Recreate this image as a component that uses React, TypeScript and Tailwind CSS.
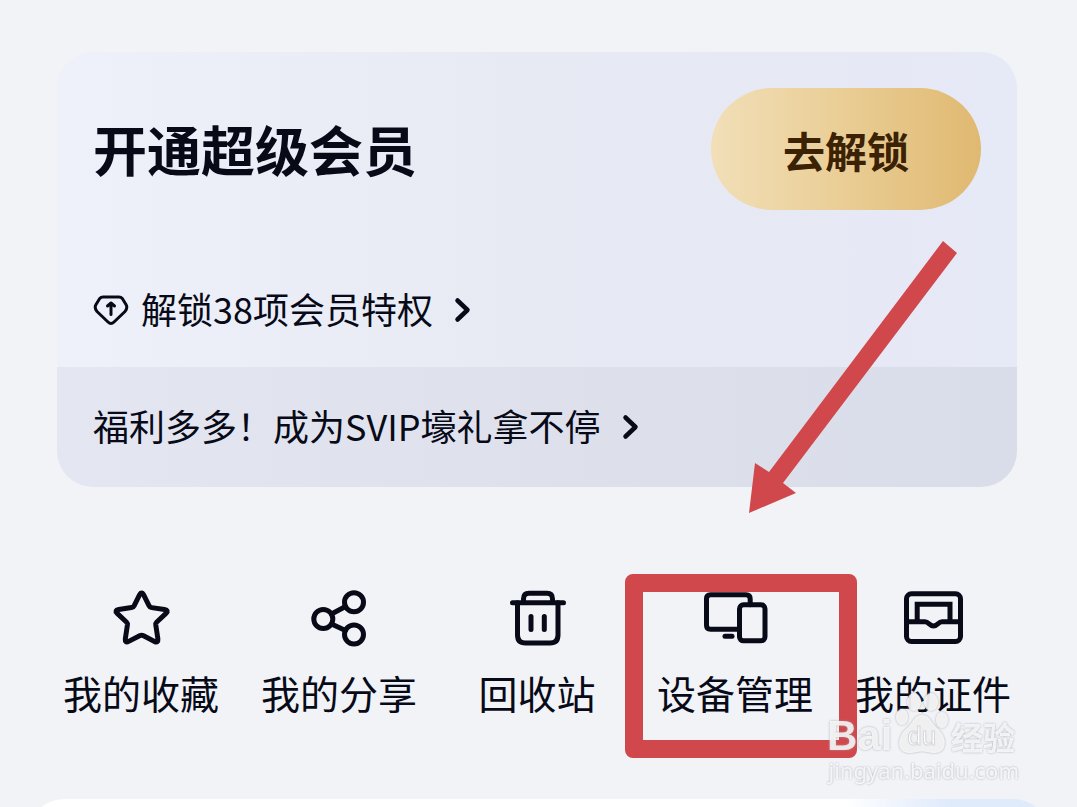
import type { ReactNode } from 'react';

const StarIcon = () => (
  <path d="M34.4 13.2Q36.6 9 38.8 13.2L44 23.6Q44.8 25.3 46.7 25.6L59.5 27.4Q64 28.2 61 31.4L51.8 40Q50.6 41.2 50.8 43L52.9 57Q53.3 61.3 49.5 59.4L38.6 53.8Q36.6 52.8 34.6 53.8L23.7 59.4Q19.9 61.3 20.3 57L22.4 43Q22.6 41.2 21.4 40L12.2 31.4Q9.2 28.2 13.7 27.4L26.5 25.6Q28.4 25.3 29.2 23.6Z" />
);

const ShareIcon = () => (
  <>
    <circle cx="20.3" cy="37" r="9.5" />
    <circle cx="51" cy="20.3" r="9.5" />
    <circle cx="51" cy="52.5" r="9.5" />
    <path d="M28.5 32L42.5 24.5M28.5 42L42.5 48.5" />
  </>
);

const TrashIcon = () => (
  <>
    <path d="M11.5 20.7H62.5M22.5 20.7V17Q22.5 11.2 28 11.2H46Q51.5 11.2 51.5 17V20.7" />
    <path d="M16.5 20.7V53Q16.5 61 24.5 61H49Q57 61 57 53V20.7" />
    <path d="M30 34.5V47.5M43.3 34.5V47.5" />
  </>
);

const DevicesIcon = () => (
  <>
    <path d="M40.5 47.2H11.5Q7.5 47.2 7.5 43.2V16.8Q7.5 12.8 11.5 12.8H47Q51.2 12.8 51.2 17V22.8" />
    <rect x="40.5" y="22.8" width="25.5" height="36" rx="4" />
    <path d="M26 54.3H33" />
  </>
);

const CardBoxIcon = () => (
  <>
    <rect x="9.5" y="11.8" width="54" height="47.7" rx="5" />
    <path d="M20.2 39.5V22.2H53V39.5" strokeLinejoin="miter" />
    <path d="M9.5 39.7H28C32 39.7 32 43.9 36.5 43.9S41 39.7 45 39.7H63.5" />
  </>
);

const Chevron = () => (
  <svg viewBox="0 0 20 28" className="h-7 w-5" fill="none" stroke="currentColor" strokeWidth="4.5" strokeLinecap="round" strokeLinejoin="round">
    <path d="M4.5 4.5L14.5 14L4.5 23.5" />
  </svg>
);

type MenuItem = { label: string; icon: ReactNode; marked?: boolean };

const menu: MenuItem[] = [
  { label: '我的收藏', icon: <StarIcon /> },
  { label: '我的分享', icon: <ShareIcon /> },
  { label: '回收站', icon: <TrashIcon /> },
  { label: '设备管理', icon: <DevicesIcon />, marked: true },
  { label: '我的证件', icon: <CardBoxIcon /> },
];

const Watermark = () => (
  <div className="pointer-events-none absolute right-[13px] top-[108px] w-[192px] text-white/80 drop-shadow-[0_0_1px_#a0a0a8]">
    <div className="flex h-16 items-end justify-between pr-1">
      <span className="font-['Liberation_Sans',sans-serif] text-[42px] font-bold leading-9">Bai</span>
      <div className="relative h-16 w-[52px]">
        <svg viewBox="0 0 52 64" className="h-full w-full" fill="currentColor">
          <ellipse cx="6" cy="27" rx="6" ry="8" />
          <ellipse cx="18" cy="12" rx="7" ry="9" />
          <ellipse cx="35" cy="12" rx="7" ry="9" />
          <ellipse cx="46" cy="30" rx="6" ry="8" />
          <path d="M26 25C34 25 35 33 42 39C52 48 51 63 39 63C33 63 31 61.5 26 61.5S19 63 13 63C1 63 0 48 10 39C17 33 18 25 26 25Z" />
        </svg>
        <span className="absolute inset-x-0 bottom-1 text-center font-['Liberation_Sans',sans-serif] text-[26px] leading-7 text-white [-webkit-text-stroke:1px_#d5d6dc]">
          du
        </span>
      </div>
      <span className="text-[32px] font-bold leading-9">经验</span>
    </div>
    <div className="pt-1 text-right font-['Noto_Sans',sans-serif] text-[22px] leading-6">jingyan.baidu.com</div>
  </div>
);

const App = () => {
  return (
    <main className="min-h-screen overflow-hidden bg-[#f1f3f7] px-7 pt-[52px] font-['Noto_Sans_CJK_SC',sans-serif] text-[#080a18]">
      {/* === Membership card === */}
      <section className="relative ml-[29px] mr-8">
        <div className="overflow-hidden rounded-[36px]">
          <div className="bg-gradient-to-r from-[#eff1fa] via-[#e7eaf3] to-[#e6e9f6] px-9 pb-[33px] pt-9">
            <div className="flex items-center justify-between">
              <h1 className="text-[54px] font-bold leading-[72px]">开通超级会员</h1>
              <button className="h-[122px] w-[270px] rounded-full bg-gradient-to-r from-[#f2dfb8] via-[#e9cd94] to-[#e0b971] text-[42px] font-bold text-[#3c2205]">
                去解锁
              </button>
            </div>
            <a href="#privileges" className="mt-[76px] flex h-12 items-center text-4xl leading-[40px]">
              <svg viewBox="0 0 36 36" className="mr-3 h-9 w-9" fill="none" stroke="currentColor" strokeWidth="3" strokeLinecap="round" strokeLinejoin="round">
                <path d="M10 5H26Q28 5 29.3 6.5L33 12.5Q35 16 32 19.5L21 30Q18 33 15 30L4 19.5Q1 16 3 12.5L6.7 6.5Q8 5 10 5Z" />
                <path d="M18 22.5V12M14.5 14L18 11L21.5 14" />
              </svg>
              <span className="mr-5 pb-1">解锁38项会员特权</span>
              <Chevron />
            </a>
          </div>
          <a href="#gifts" className="flex h-[120px] items-center bg-gradient-to-r from-[#e4e7f2] via-[#dee1ec] to-[#d9dde9] px-9 text-4xl leading-[40px]">
            <span className="mr-5 pb-1">福利多多！成为SVIP壕礼拿不停</span>
            <Chevron />
          </a>
        </div>

        {/* Arrow pointing down to the marked entry */}
        <svg viewBox="0 0 208 273" className="pointer-events-none absolute right-[60px] top-[189px] z-10 h-[273px] w-[208px]" fill="#d0484b">
          <path d="M194 0L208 12L34 242L47 252L0 272L6 222L20 231Z" />
        </svg>
      </section>

      {/* === Shortcuts === */}
      <nav className="relative ml-[14px] mr-[17px] mt-[95px] grid grid-cols-5">
        {menu.map((item) => (
          <a key={item.label} href="#" className="relative flex flex-col items-center gap-[18px]">
            {item.marked && (
              <span className="absolute -left-[11px] -right-[23px] -top-2 h-[184px] rounded-lg border-[18px] border-[#d0484b]" />
            )}
            <svg viewBox="0 0 72 72" className="h-[72px] w-[72px]" fill="none" stroke="currentColor" strokeWidth="5" strokeLinecap="round" strokeLinejoin="round">
              {item.icon}
            </svg>
            <span className="relative whitespace-nowrap text-[39px] leading-[40px]">{item.label}</span>
          </a>
        ))}
        <Watermark />
      </nav>

      {/* Top edge of the next panel */}
      <div className="mt-[87px] h-2 overflow-hidden">
        <div className="h-20 rounded-t-[36px] bg-gradient-to-r from-white from-80% to-[#dfeafb] to-90%" />
      </div>
    </main>
  );
};

export default App;
